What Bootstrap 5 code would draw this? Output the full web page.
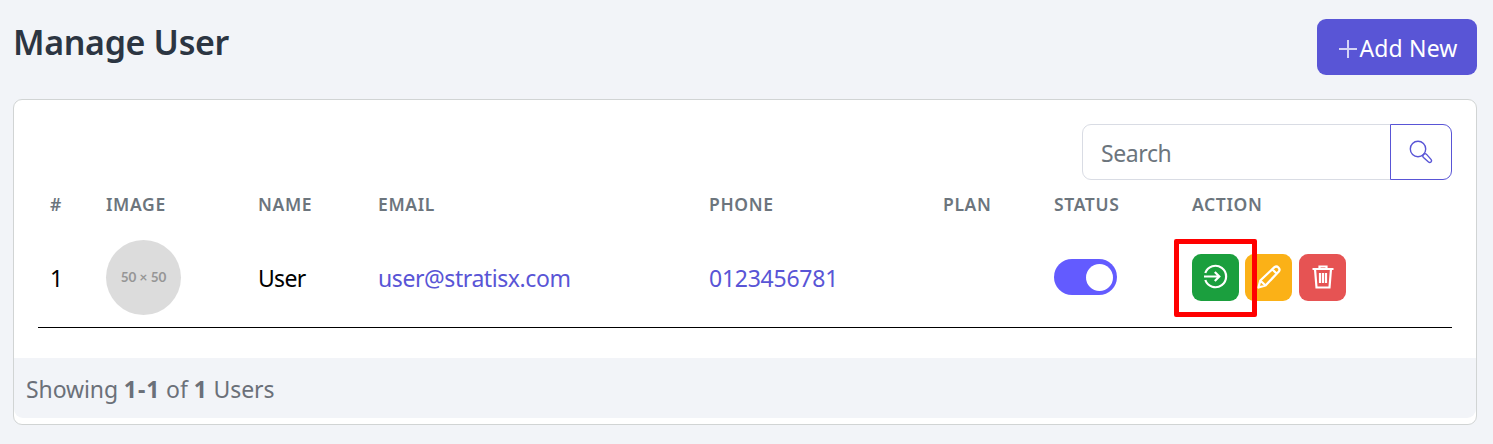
<!DOCTYPE html>
<html lang="en">
<head>
<meta charset="utf-8">
<meta name="viewport" content="width=device-width, initial-scale=1">
<title>Manage User</title>
<link rel="stylesheet" href="https://cdn.jsdelivr.net/npm/bootstrap@5.3.0/dist/css/bootstrap.min.css">
<style>
  body { background: #f2f4f8; font-family: "Segoe UI", "Noto Sans", sans-serif; font-size: 23px; line-height: 36px; letter-spacing: -.3px; color: #000; overflow: hidden; }
  .page { padding: 19px 16px 0 13px; }
  .page-title { font-size: 34px; font-weight: 600; line-height: 46px; color: #2c3542; letter-spacing: -.35px; }
  .btn-add { width: 160px; height: 56px; background: #5955d6; color: #fff; border-radius: 9px; font-size: 23px; letter-spacing: .15px; padding: 3px 0 0 3px; }
  .panel { height: 326px; margin-top: 24px; border: 1px solid #d1d4d4; border-radius: 9px; background: #fff; }
  .panel-main { height: 258px; padding: 24px 24px 0; }
  .search-group { width: 370px; height: 56px; }
  .search-group .form-control { border-color: #d9dce4; border-radius: 9px 0 0 9px; padding: 2px 18px 0; font-size: 23px; letter-spacing: -.4px; color: #6c757d; }
  .search-group .form-control::placeholder { color: #6c757d; }
  .btn-search { width: 62px; border: 1px solid #5955d6; border-radius: 0 9px 9px 0; padding: 0; }
  .user-table { table-layout: fixed; width: 1414px; --bs-table-bg: #fff; --bs-table-color: #000; }
  .user-table th { height: 48px; padding: 0 12px; border: 0; color: #6c757d; font-size: 17.5px; font-weight: 600; letter-spacing: .65px; line-height: 24px; }
  .user-table thead th { vertical-align: top; padding-top: 12px; }
  .user-table td { height: 99px; padding: 1px 12px 0; border-bottom: 1px solid #000; }
  .user-table td.flat { padding-top: 0; }
  .user-table td.tight { letter-spacing: -.7px; }
  .user-table a { color: #5955d6; text-decoration: none; letter-spacing: -.42px; }
  .user-table a.digits { letter-spacing: -.25px; }
  .avatar { width: 75px; height: 75px; background: #dcdcdc; color: #969696; font: 700 13.5px Lato, sans-serif; letter-spacing: 0; }
  .toggle { display: block; width: 63px; height: 36px; border-radius: 18px; background: #635bff; padding: 5px 4px; }
  .toggle i { display: block; width: 27px; height: 27px; margin-left: auto; border-radius: 50%; background: #fff; }
  .act { width: 47px; height: 47px; border-radius: 9px; padding: 0 0 1px; border: 0; }
  .act-login { background: #1b9f3e; }
  .act-edit { background: #fbb117; }
  .act-delete { background: #e65353; }
  .highlight { position: absolute; left: -18px; top: -15px; width: 83px; height: 78px; border: 5px solid #f00; border-radius: 2px; }
  .panel-foot { height: 60px; padding: 2px 12px 0; background: #f2f4f8; color: #6b7079; border-radius: 0 0 9px 9px; letter-spacing: -.1px; }
  .panel-foot b { letter-spacing: .9px; }
  svg { display: block; }
</style>
</head>
<body>
<main class="page">
  <header class="d-flex justify-content-between align-items-start">
    <h1 class="page-title mb-0">Manage User</h1>
    <button class="btn btn-add d-flex align-items-center justify-content-center" type="button">
      <svg width="20" height="20" viewBox="0 0 20 20" fill="none" stroke="#d5d4f5" stroke-width="2" shape-rendering="crispEdges"><path d="M9 1v18M0 10h18"/></svg><span>Add New</span>
    </button>
  </header>

  <section class="panel">
    <div class="panel-main">
      <div class="input-group search-group ms-auto flex-nowrap">
        <input class="form-control" type="text" placeholder="Search" aria-label="Search">
        <button class="btn btn-search d-flex align-items-center justify-content-center" type="button" aria-label="Search">
          <svg width="24" height="24" viewBox="0 0 24 24" fill="none" stroke="#5955d6" stroke-width="1.4"><circle cx="9" cy="9" r="7.7"/><path d="M14 15.2l1.4-1.4c.8-.4 1.6 0 2.2.6l4.4 5c1.5 1.8-.8 4-2.5 2.5l-5-4.5c-.7-.7-1-1.5-.5-2.2z"/></svg>
        </button>
      </div>
      <table class="table user-table mb-0 align-middle text-nowrap">
        <colgroup><col style="width:56px"><col style="width:152px"><col style="width:120px"><col style="width:331px"><col style="width:234px"><col style="width:111px"><col style="width:138px"><col style="width:272px"></colgroup>
        <thead>
          <tr><th>#</th><th>IMAGE</th><th>NAME</th><th>EMAIL</th><th>PHONE</th><th>PLAN</th><th>STATUS</th><th>ACTION</th></tr>
        </thead>
        <tbody>
          <tr>
            <td>1</td>
            <td class="flat"><div class="avatar rounded-circle d-flex align-items-center justify-content-center">50 × 50</div></td>
            <td class="tight">User</td>
            <td><a href="#">user@stratisx.com</a></td>
            <td><a class="digits" href="#">0123456781</a></td>
            <td></td>
            <td class="flat"><span class="toggle" role="switch" aria-checked="true"><i></i></span></td>
            <td class="flat">
              <div class="d-flex position-relative">
                <button class="btn act act-login d-flex align-items-center justify-content-center" type="button" aria-label="Log in">
                  <svg width="25" height="25" viewBox="0 0 25 25" fill="none" stroke="#fff" stroke-width="2.2"><path d="M2.3 9a10.7 10.7 0 1 1 0 7"/><path d="M1 12.5h15M11.8 8l4.5 4.5-4.5 4.5"/></svg>
                </button>
                <button class="btn act act-edit d-flex align-items-center justify-content-center" style="margin-left:6px" type="button" aria-label="Edit">
                  <svg width="24" height="24" viewBox="0 0 24 24" fill="none" stroke="#fff" stroke-width="2.3" stroke-linejoin="round"><path d="M1.5 22.5l1.8-7L17.5 2.2c2.5-2.2 6.5 1.5 4.3 4.3L8.5 20.5zM15.500 4.500l4 4M3.300 15.500l5.200 5"/></svg>
                </button>
                <button class="btn act act-delete d-flex align-items-center justify-content-center" style="margin-left:7px" type="button" aria-label="Delete">
                  <svg width="22" height="24" viewBox="0 0 22 24" fill="none" stroke="#fff" stroke-width="2.2"><path d="M.5 4h21M7.5 4V1.500h7V4M3 4l1.500 18.500h13L19 4"/><path d="M8 8v10M11 8v10M14 8v10"/></svg>
                </button>
                <span class="highlight"></span>
              </div>
            </td>
          </tr>
        </tbody>
      </table>
    </div>
    <footer class="panel-foot d-flex align-items-center"><span>Showing <b>1-1</b> of <b>1</b> Users</span></footer>
  </section>
</main>
<script src="https://cdn.jsdelivr.net/npm/bootstrap@5.3.0/dist/js/bootstrap.bundle.min.js"></script>
</body>
</html>
